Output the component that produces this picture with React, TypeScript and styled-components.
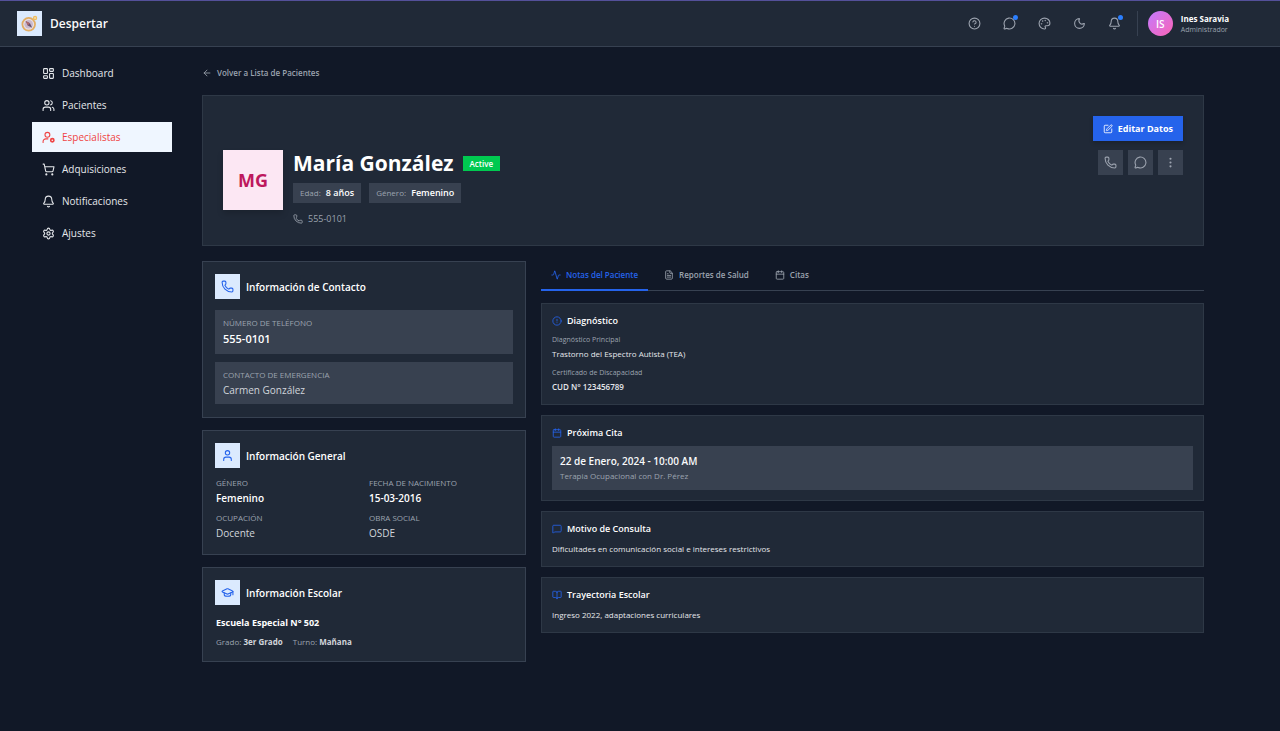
import React from "react";
import styled, { createGlobalStyle, css } from "styled-components";
import {
  Activity,
  ArrowLeft,
  Bell,
  BookOpen,
  Calendar,
  CircleAlert,
  CircleQuestionMark,
  EllipsisVertical,
  FileText,
  GraduationCap,
  LayoutDashboard,
  MessageCircle,
  MessageSquare,
  Moon,
  Palette,
  Phone,
  Settings,
  ShoppingCart,
  SquarePen,
  User,
  Users,
  type LucideIcon,
} from "lucide-react";

const color = {
  page: "#111827",
  surface: "#202937",
  raised: "#384150",
  border: "#374151",
  faintBorder: "#2e3846",
  blue: "#2563eb",
  tile: "#dbeafe",
  text: "#f9fafb",
  soft: "#d1d5db",
  muted: "#9ca3af",
};

const GlobalStyle = createGlobalStyle`
  *, *::before, *::after { box-sizing: border-box; }
  body {
    margin: 0;
    min-height: 100vh;
    background: ${color.page};
    color: ${color.text};
    font-family: "Segoe UI", "Open Sans", "Noto Sans", sans-serif;
    font-size: 9px;
    line-height: 12px;
  }
  h1, h2, h3, p, dl, dt, dd, ul { margin: 0; padding: 0; }
  ul { list-style: none; }
  a { color: inherit; text-decoration: none; }
  button { font: inherit; color: inherit; border: 0; padding: 0; background: none; cursor: pointer; }
  svg { flex: none; display: block; }
`;

const TopBar = styled.header`
  display: flex;
  align-items: center;
  justify-content: space-between;
  height: 47px;
  padding: 0 51px 0 17px;
  background: ${color.surface};
  border-top: 1px solid #54509a;
  border-bottom: 1px solid ${color.border};
`;

const Brand = styled.a`
  display: flex;
  align-items: center;
  gap: 8px;
  font-size: 12px;
  line-height: 16px;
  font-weight: 600;
`;

const Tile = styled.span`
  display: grid;
  place-items: center;
  flex: none;
  width: 25px;
  height: 25px;
  background: ${color.tile};
  color: ${color.blue};
`;

const Tools = styled.div`
  display: flex;
  align-items: center;
`;

const ToolButton = styled.button`
  position: relative;
  display: grid;
  place-items: center;
  width: 25px;
  height: 25px;
  margin-right: 10px;
  color: ${color.muted};
`;

const Dot = styled.span`
  position: absolute;
  top: 4px;
  right: 4px;
  width: 5px;
  height: 5px;
  border-radius: 50%;
  background: #2b7fff;
`;

const Account = styled.button`
  display: flex;
  align-items: center;
  gap: 8px;
  padding-left: 10px;
  border-left: 1px solid ${color.border};
  text-align: left;
`;

const Initials = styled.span`
  display: grid;
  place-items: center;
  width: 25px;
  height: 25px;
  border-radius: 50%;
  background: linear-gradient(135deg, #c27aff, #fb64b6);
  color: #fff;
  font-size: 10px;
  font-weight: 600;
`;

const AccountText = styled.span`
  display: flex;
  flex-direction: column;
  font-size: 7px;
  line-height: 11px;
  color: ${color.muted};

  strong {
    font-size: 8px;
    font-weight: 700;
    color: #fff;
  }
`;

const Shell = styled.div`
  display: flex;
  align-items: flex-start;
  gap: 30px;
  padding: 11px 76px 24px 32px;
`;

const SideNav = styled.nav`
  flex: none;
  width: 140px;

  ul {
    display: flex;
    flex-direction: column;
    gap: 2px;
  }
`;

const NavLink = styled.a<{ $active?: boolean }>`
  display: flex;
  align-items: center;
  gap: 7px;
  height: 30px;
  padding: 0 10px;
  font-size: 10px;
  line-height: 16px;
  font-weight: 500;
  color: ${(p) => (p.$active ? "#ef4444" : "#e5e7eb")};
  background: ${(p) => (p.$active ? "#eff6ff" : "transparent")};
`;

const Main = styled.main`
  flex: 1;
  min-width: 0;
`;

const BackLink = styled.a`
  display: inline-flex;
  align-items: center;
  gap: 5px;
  height: 30px;
  font-size: 8px;
  font-weight: 600;
  color: ${color.muted};
`;

const panel = css<{ $faint?: boolean }>`
  background: ${color.surface};
  border: 1px solid ${(p) => (p.$faint ? color.faintBorder : color.border)};
`;

const Hero = styled.section<{ $faint?: boolean }>`
  ${panel}
  display: flex;
  justify-content: space-between;
  margin-top: 7px;
  padding: 20px;
`;

const Person = styled.div`
  display: flex;
  gap: 10px;
  padding-top: 34px;
`;

const Portrait = styled.div`
  display: grid;
  place-items: center;
  width: 60px;
  height: 60px;
  background: #fce7f3;
  color: #be185d;
  font-size: 18px;
  font-weight: 700;
  box-shadow: 0 4px 6px rgba(0, 0, 0, 0.15);
`;

const NameRow = styled.div`
  display: flex;
  align-items: center;
  gap: 9px;

  h1 {
    font-size: 21px;
    line-height: 26px;
    font-weight: 700;
    color: #fff;
  }
`;

const Status = styled.span`
  height: 15px;
  padding: 0 7px;
  background: #00c950;
  color: #fff;
  font-size: 8px;
  line-height: 15px;
  font-weight: 600;
`;

const Chips = styled.div`
  display: flex;
  gap: 8px;
  margin-top: 7px;
`;

const Chip = styled.span`
  height: 20px;
  padding: 0 7px;
  background: ${color.raised};
  color: ${color.muted};
  font-size: 8px;
  line-height: 20px;

  strong {
    margin-left: 3px;
    font-size: 9px;
    font-weight: 600;
    color: #fff;
  }
`;

const PhoneLine = styled.p`
  display: flex;
  align-items: center;
  gap: 5px;
  margin-top: 10px;
  color: ${color.muted};
`;

const Actions = styled.div`
  display: flex;
  flex-direction: column;
  align-items: flex-end;
  gap: 9px;
`;

const EditButton = styled.button`
  display: flex;
  align-items: center;
  gap: 5px;
  height: 25px;
  padding: 0 10px;
  background: ${color.blue};
  color: #fff;
  font-size: 9px;
  font-weight: 700;
  box-shadow: 0 2px 4px rgba(0, 0, 0, 0.2);
`;

const IconRow = styled.div`
  display: flex;
  gap: 5px;
`;

const SquareButton = styled.button`
  display: grid;
  place-items: center;
  width: 25px;
  height: 25px;
  background: ${color.raised};
  color: ${color.muted};
`;

const Columns = styled.div`
  display: grid;
  grid-template-columns: repeat(12, minmax(0, 1fr));
  gap: 15px;
  margin-top: 15px;
`;

const InfoColumn = styled.div`
  grid-column: span 4;
  display: flex;
  flex-direction: column;
  gap: 12px;
`;

const InfoCard = styled.section<{ $faint?: boolean }>`
  ${panel}
  padding: 12px 12px 13px;
`;

const InfoTitle = styled.h2`
  display: flex;
  align-items: center;
  gap: 6px;
  font-size: 10px;
  line-height: 14px;
  font-weight: 600;
  color: #fff;
`;

const Fields = styled.dl`
  display: flex;
  flex-direction: column;
  gap: 8px;
  margin-top: 11px;
`;

const FieldGrid = styled.dl`
  display: grid;
  grid-template-columns: 1fr 1fr;
  gap: 5px 8px;
  margin-top: 8px;
`;

const Field = styled.div<{ $boxed?: boolean; $strong?: boolean; $large?: boolean }>`
  padding: ${(p) => (p.$boxed ? "6px 8px" : "0 1px")};
  background: ${(p) => (p.$boxed ? color.raised : "transparent")};

  dt {
    font-size: 8px;
    line-height: 14px;
    color: ${color.muted};
    text-transform: uppercase;
  }

  dd {
    font-size: ${(p) => (p.$large ? "11px" : "10px")};
    line-height: ${(p) => (p.$large ? "18px" : "16px")};
    font-weight: ${(p) => (p.$strong ? 600 : 500)};
    color: ${(p) => (p.$strong ? "#fff" : color.soft)};
  }
`;

const School = styled.p`
  margin-top: 10px;
  padding: 0 1px;
  font-size: 9px;
  line-height: 16px;
  font-weight: 700;
  color: #fff;
`;

const SchoolMeta = styled.p`
  display: flex;
  gap: 10px;
  margin-top: 5px;
  padding: 0 1px;
  font-size: 8px;
  line-height: 12px;
  color: ${color.muted};

  strong {
    font-weight: 700;
    color: ${color.soft};
  }
`;

const NotesColumn = styled.div`
  grid-column: span 8;
`;

const Tabs = styled.div`
  display: flex;
  gap: 6px;
  border-bottom: 1px solid ${color.border};
`;

const Tab = styled.button<{ $active?: boolean }>`
  display: flex;
  align-items: center;
  gap: 5px;
  height: 30px;
  margin-bottom: -1px;
  padding: 0 10px;
  font-size: 8px;
  font-weight: 600;
  color: ${(p) => (p.$active ? color.blue : color.muted)};
  border-bottom: 2px solid ${(p) => (p.$active ? color.blue : "transparent")};
`;

const Notes = styled.div`
  display: flex;
  flex-direction: column;
  gap: 10px;
  margin-top: 12px;
`;

const NoteCard = styled.section<{ $faint?: boolean }>`
  ${panel}
  padding: 10px;
`;

const NoteTitle = styled.h3`
  display: flex;
  align-items: center;
  gap: 5px;
  font-size: 9px;
  line-height: 14px;
  font-weight: 600;
  color: #fff;

  svg {
    color: ${color.blue};
  }
`;

const NoteText = styled.p`
  margin-top: 6px;
  font-size: 8px;
  line-height: 14px;
  color: #e5e7eb;
`;

const Facts = styled.dl`
  display: flex;
  flex-direction: column;
  gap: 5px;
  margin-top: 5px;

  dt {
    font-size: 7px;
    line-height: 14px;
    color: ${color.muted};
  }
`;

const Fact = styled.dd<{ $medium?: boolean }>`
  font-size: 8px;
  line-height: 14px;
  font-weight: ${(p) => (p.$medium ? 600 : 400)};
  color: #e5e7eb;
`;

const Appointment = styled.div`
  margin-top: 6px;
  padding: 7px 8px;
  background: ${color.raised};
  color: ${color.muted};
  font-size: 8px;
  line-height: 14px;

  strong {
    display: block;
    font-size: 10px;
    line-height: 16px;
    font-weight: 600;
    color: ${color.text};
  }
`;

function Logo() {
  return (
    <svg width="19" height="19" viewBox="0 0 24 24" fill="none" aria-hidden="true">
      <circle cx="11" cy="13" r="8" fill="#e8dfe6" stroke="#e2ad63" strokeWidth="2.2" />
      <circle cx="11" cy="13" r="5.4" fill="#c9b9cd" />
      <path d="M7.2 8.8l5.400 3 2.800 5.600-5.600-2.800z" fill="#62506f" />
      <path d="M7.2 8.8l5.400 3-2.800 2.800z" fill="#b3696b" />
      <circle cx="19" cy="5" r="2" fill="#f3dcae" stroke="#efbd5e" strokeWidth="1.500" />
    </svg>
  );
}

function SpecialistIcon({ size = 13 }: { size?: number }) {
  return (
    <svg
      width={size}
      height={size}
      viewBox="0 0 24 24"
      fill="none"
      stroke="currentColor"
      strokeWidth="2"
      strokeLinecap="round"
      aria-hidden="true"
    >
      <circle cx="10" cy="7" r="4.500" />
      <path d="M2 21v-1.500a5 5 0 0 1 5-5h4" />
      <circle cx="19" cy="17" r="3" strokeWidth="3" />
    </svg>
  );
}

const navigation: { label: string; icon: LucideIcon | typeof SpecialistIcon; active?: boolean }[] = [
  { label: "Dashboard", icon: LayoutDashboard },
  { label: "Pacientes", icon: Users },
  { label: "Especialistas", icon: SpecialistIcon, active: true },
  { label: "Adquisiciones", icon: ShoppingCart },
  { label: "Notificaciones", icon: Bell },
  { label: "Ajustes", icon: Settings },
];

const tools: { label: string; icon: LucideIcon; dot?: boolean }[] = [
  { label: "Ayuda", icon: CircleQuestionMark },
  { label: "Mensajes", icon: MessageCircle, dot: true },
  { label: "Tema", icon: Palette },
  { label: "Modo oscuro", icon: Moon },
  { label: "Notificaciones", icon: Bell, dot: true },
];

function CardTitle({ icon: Icon, children }: { icon: LucideIcon; children: React.ReactNode }) {
  return (
    <InfoTitle>
      <Tile>
        <Icon size={13} />
      </Tile>
      {children}
    </InfoTitle>
  );
}

function Note({ icon: Icon, title, children }: { icon: LucideIcon; title: string; children: React.ReactNode }) {
  return (
    <NoteCard $faint>
      <NoteTitle>
        <Icon size={10} />
        {title}
      </NoteTitle>
      {children}
    </NoteCard>
  );
}

export default function App() {
  return (
    <>
      <GlobalStyle />
      <TopBar>
        <Brand href="#">
          <Tile>
            <Logo />
          </Tile>
          Despertar
        </Brand>
        <Tools>
          {tools.map(({ label, icon: Icon, dot }) => (
            <ToolButton key={label} type="button" aria-label={label}>
              <Icon size={13} />
              {dot && <Dot />}
            </ToolButton>
          ))}
          <Account type="button">
            <Initials>IS</Initials>
            <AccountText>
              <strong>Ines Saravia</strong>
              Administrador
            </AccountText>
          </Account>
        </Tools>
      </TopBar>

      <Shell>
        <SideNav>
          <ul>
            {navigation.map(({ label, icon: Icon, active }) => (
              <li key={label}>
                <NavLink href="#" $active={active}>
                  <Icon size={13} />
                  {label}
                </NavLink>
              </li>
            ))}
          </ul>
        </SideNav>

        <Main>
          <BackLink href="#">
            <ArrowLeft size={10} />
            Volver a Lista de Pacientes
          </BackLink>

          <Hero $faint>
            <Person>
              <Portrait>MG</Portrait>
              <div>
                <NameRow>
                  <h1>María González</h1>
                  <Status>Active</Status>
                </NameRow>
                <Chips>
                  <Chip>
                    Edad: <strong>8 años</strong>
                  </Chip>
                  <Chip>
                    Género: <strong>Femenino</strong>
                  </Chip>
                </Chips>
                <PhoneLine>
                  <Phone size={10} />
                  555-0101
                </PhoneLine>
              </div>
            </Person>
            <Actions>
              <EditButton type="button">
                <SquarePen size={10} />
                Editar Datos
              </EditButton>
              <IconRow>
                <SquareButton type="button" aria-label="Llamar">
                  <Phone size={13} />
                </SquareButton>
                <SquareButton type="button" aria-label="Enviar mensaje">
                  <MessageCircle size={13} />
                </SquareButton>
                <SquareButton type="button" aria-label="Más opciones">
                  <EllipsisVertical size={13} />
                </SquareButton>
              </IconRow>
            </Actions>
          </Hero>

          <Columns>
            <InfoColumn>
              <InfoCard>
                <CardTitle icon={Phone}>Información de Contacto</CardTitle>
                <Fields>
                  <Field $boxed $strong $large>
                    <dt>Número de Teléfono</dt>
                    <dd>555-0101</dd>
                  </Field>
                  <Field $boxed>
                    <dt>Contacto de Emergencia</dt>
                    <dd>Carmen González</dd>
                  </Field>
                </Fields>
              </InfoCard>

              <InfoCard>
                <CardTitle icon={User}>Información General</CardTitle>
                <FieldGrid>
                  <Field $strong>
                    <dt>Género</dt>
                    <dd>Femenino</dd>
                  </Field>
                  <Field $strong>
                    <dt>Fecha de Nacimiento</dt>
                    <dd>15-03-2016</dd>
                  </Field>
                  <Field>
                    <dt>Ocupación</dt>
                    <dd>Docente</dd>
                  </Field>
                  <Field>
                    <dt>Obra Social</dt>
                    <dd>OSDE</dd>
                  </Field>
                </FieldGrid>
              </InfoCard>

              <InfoCard>
                <CardTitle icon={GraduationCap}>Información Escolar</CardTitle>
                <School>Escuela Especial N° 502</School>
                <SchoolMeta>
                  <span>
                    Grado: <strong>3er Grado</strong>
                  </span>
                  <span>
                    Turno: <strong>Mañana</strong>
                  </span>
                </SchoolMeta>
              </InfoCard>
            </InfoColumn>

            <NotesColumn>
              <Tabs role="tablist">
                <Tab type="button" role="tab" aria-selected="true" $active>
                  <Activity size={10} />
                  Notas del Paciente
                </Tab>
                <Tab type="button" role="tab" aria-selected="false">
                  <FileText size={10} />
                  Reportes de Salud
                </Tab>
                <Tab type="button" role="tab" aria-selected="false">
                  <Calendar size={10} />
                  Citas
                </Tab>
              </Tabs>

              <Notes>
                <Note icon={CircleAlert} title="Diagnóstico">
                  <Facts>
                    <div>
                      <dt>Diagnóstico Principal</dt>
                      <Fact>Trastorno del Espectro Autista (TEA)</Fact>
                    </div>
                    <div>
                      <dt>Certificado de Discapacidad</dt>
                      <Fact $medium>CUD N° 123456789</Fact>
                    </div>
                  </Facts>
                </Note>
                <Note icon={Calendar} title="Próxima Cita">
                  <Appointment>
                    <strong>22 de Enero, 2024 - 10:00 AM</strong>
                    Terapia Ocupacional con Dr. Pérez
                  </Appointment>
                </Note>
                <Note icon={MessageSquare} title="Motivo de Consulta">
                  <NoteText>Dificultades en comunicación social e intereses restrictivos</NoteText>
                </Note>
                <Note icon={BookOpen} title="Trayectoria Escolar">
                  <NoteText>Ingreso 2022, adaptaciones curriculares</NoteText>
                </Note>
              </Notes>
            </NotesColumn>
          </Columns>
        </Main>
      </Shell>
    </>
  );
}
